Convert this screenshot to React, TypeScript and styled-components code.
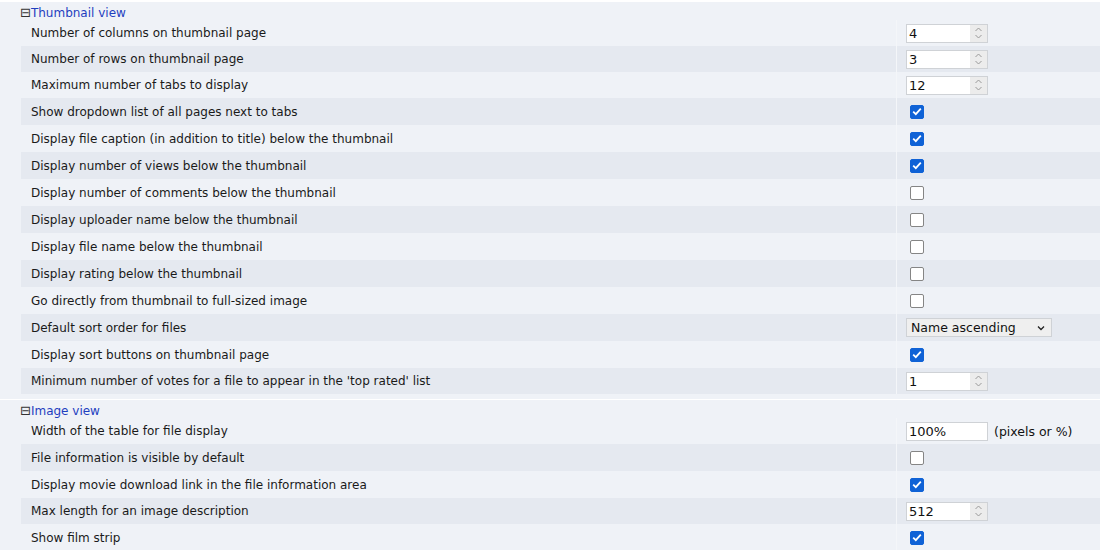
import React from "react";
import styled, { createGlobalStyle } from "styled-components";

type Control =
  | { kind: "number"; value: string }
  | { kind: "check"; checked: boolean }
  | { kind: "select"; value: string }
  | { kind: "text"; value: string; suffix?: string };

interface Setting {
  label: string;
  control: Control;
}

interface SectionData {
  title: string;
  rows: Setting[];
}

const sections: SectionData[] = [
  {
    title: "Thumbnail view",
    rows: [
      { label: "Number of columns on thumbnail page", control: { kind: "number", value: "4" } },
      { label: "Number of rows on thumbnail page", control: { kind: "number", value: "3" } },
      { label: "Maximum number of tabs to display", control: { kind: "number", value: "12" } },
      { label: "Show dropdown list of all pages next to tabs", control: { kind: "check", checked: true } },
      { label: "Display file caption (in addition to title) below the thumbnail", control: { kind: "check", checked: true } },
      { label: "Display number of views below the thumbnail", control: { kind: "check", checked: true } },
      { label: "Display number of comments below the thumbnail", control: { kind: "check", checked: false } },
      { label: "Display uploader name below the thumbnail", control: { kind: "check", checked: false } },
      { label: "Display file name below the thumbnail", control: { kind: "check", checked: false } },
      { label: "Display rating below the thumbnail", control: { kind: "check", checked: false } },
      { label: "Go directly from thumbnail to full-sized image", control: { kind: "check", checked: false } },
      { label: "Default sort order for files", control: { kind: "select", value: "Name ascending" } },
      { label: "Display sort buttons on thumbnail page", control: { kind: "check", checked: true } },
      { label: "Minimum number of votes for a file to appear in the 'top rated' list", control: { kind: "number", value: "1" } },
    ],
  },
  {
    title: "Image view",
    rows: [
      { label: "Width of the table for file display", control: { kind: "text", value: "100%", suffix: "(pixels or %)" } },
      { label: "File information is visible by default", control: { kind: "check", checked: false } },
      { label: "Display movie download link in the file information area", control: { kind: "check", checked: true } },
      { label: "Max length for an image description", control: { kind: "number", value: "512" } },
      { label: "Show film strip", control: { kind: "check", checked: true } },
    ],
  },
];

const GlobalStyle = createGlobalStyle`
  html, body {
    margin: 0;
    padding: 0;
    background: #ffffff;
  }
  body {
    font-family: "DejaVu Sans", Verdana, sans-serif;
    font-size: 12px;
    color: #1a1a1a;
    overflow: hidden;
  }
`;

const Page = styled.div`
  padding-top: 2px;
  display: flex;
  flex-direction: column;
  gap: 1px;
`;

const Section = styled.div`
  background: #eff2f7;
  padding: 0 0 5px 21px;
`;

const SectionHeader = styled.div`
  height: 18px;
  display: flex;
  align-items: flex-end;
  margin-left: -1px;
  line-height: 14px;
  color: #1f3fbf;
`;

const Toggle = styled.span`
  font-size: 13px;
  line-height: 14px;
  color: #333;
`;

const Row = styled.div<{ $alt: boolean; $tall: boolean }>`
  display: grid;
  grid-template-columns: 876px 1fr;
  height: ${(p) => (p.$tall ? 27 : 26)}px;
  background: ${(p) => (p.$alt ? "#e5e9f0" : "transparent")};
`;

const Label = styled.div`
  display: flex;
  align-items: center;
  padding-left: 10px;
  border-right: 1px solid #f4f6f9;
  white-space: nowrap;
`;

const Value = styled.div`
  display: flex;
  align-items: center;
  padding-left: 9px;
  gap: 6px;
`;

const Field = styled.div<{ $width: number }>`
  width: ${(p) => p.$width}px;
  height: 19px;
  box-sizing: border-box;
  border: 1px solid #cfd2d6;
  background: #ffffff;
  display: flex;
  align-items: center;
  padding-left: 2px;
  font-size: 13px;
  color: #111;
`;

const FieldText = styled.span`
  flex: 1;
`;

const Spinner = styled.div`
  width: 17px;
  height: 100%;
  background: #ececec;
  display: flex;
  align-items: center;
  justify-content: center;
`;

const Suffix = styled.span`
  font-size: 12.5px;
  color: #111;
`;

const SelectBox = styled.div`
  width: 146px;
  height: 19px;
  box-sizing: border-box;
  border: 1px solid #cfd2d6;
  background: #efefef;
  display: flex;
  align-items: center;
  justify-content: space-between;
  padding: 0 6px 0 4px;
  font-size: 12.5px;
  color: #111;
`;

const Box = styled.span<{ $checked: boolean }>`
  width: 14px;
  height: 14px;
  margin-left: 4px;
  box-sizing: border-box;
  border-radius: 2px;
  border: 1px solid ${(p) => (p.$checked ? "#0f62d6" : "#858585")};
  background: ${(p) => (p.$checked ? "#0f62d6" : "#ffffff")};
  display: flex;
  align-items: center;
  justify-content: center;
`;

const SpinArrows: React.FC = () => (
  <svg width="9" height="14" viewBox="0 0 9 14">
    <path d="M1.5 5 L4.5 2 L7.5 5" fill="none" stroke="#9a9a9a" strokeWidth="1" />
    <path d="M1.5 9 L4.5 12 L7.5 9" fill="none" stroke="#9a9a9a" strokeWidth="1" />
  </svg>
);

const Chevron: React.FC = () => (
  <svg width="8" height="6" viewBox="0 0 8 6">
    <path d="M1 1.5 L4 4.5 L7 1.5" fill="none" stroke="#222" strokeWidth="1.3" />
  </svg>
);

const Tick: React.FC = () => (
  <svg width="10" height="9" viewBox="0 0 10 9">
    <path d="M1.2 4.6 L3.8 7.1 L8.8 1.6" fill="none" stroke="#ffffff" strokeWidth="1.8" />
  </svg>
);

const ControlView: React.FC<{ control: Control }> = ({ control }) => {
  switch (control.kind) {
    case "number":
      return (
        <Field $width={82}>
          <FieldText>{control.value}</FieldText>
          <Spinner>
            <SpinArrows />
          </Spinner>
        </Field>
      );
    case "text":
      return (
        <>
          <Field $width={82}>
            <FieldText>{control.value}</FieldText>
          </Field>
          {control.suffix && <Suffix>{control.suffix}</Suffix>}
        </>
      );
    case "select":
      return (
        <SelectBox>
          <span>{control.value}</span>
          <Chevron />
        </SelectBox>
      );
    case "check":
      return <Box $checked={control.checked}>{control.checked && <Tick />}</Box>;
  }
};

const App: React.FC = () => (
  <>
    <GlobalStyle />
    <Page>
      {sections.map((section) => (
        <Section key={section.title}>
          <SectionHeader>
            <Toggle>⊟</Toggle>
            {section.title}
          </SectionHeader>
          {section.rows.map((row, i) => (
            <Row key={row.label} $alt={i % 2 === 1} $tall={row.control.kind !== "number" && row.control.kind !== "text"}>
              <Label>{row.label}</Label>
              <Value>
                <ControlView control={row.control} />
              </Value>
            </Row>
          ))}
        </Section>
      ))}
    </Page>
  </>
);

export default App;
